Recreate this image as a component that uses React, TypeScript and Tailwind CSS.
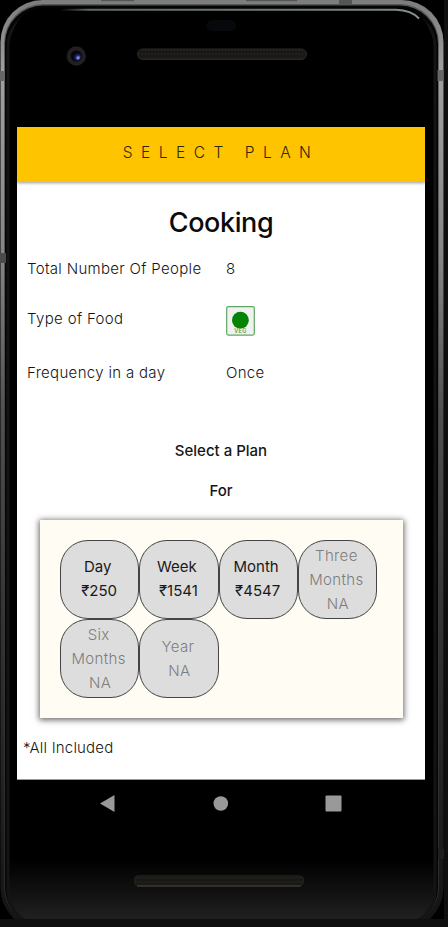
import React from 'react';

function Bezel() {
  return (
    <svg className="absolute left-0 top-0" width="448" height="927" viewBox="0 0 448 927" aria-hidden="true">
      <defs>
        <linearGradient id="rail" x1="0" y1="0" x2="0" y2="919" gradientUnits="userSpaceOnUse">
          <stop offset="0" stopColor="#7c7c7c" />
          <stop offset="0.08" stopColor="#a0a0a0" />
          <stop offset="0.28" stopColor="#858585" />
          <stop offset="0.45" stopColor="#505050" />
          <stop offset="0.65" stopColor="#363636" />
          <stop offset="0.8" stopColor="#272727" />
          <stop offset="1" stopColor="#141414" />
        </linearGradient>
        <linearGradient id="chin" x1="0" y1="860" x2="0" y2="919" gradientUnits="userSpaceOnUse">
          <stop offset="0" stopColor="#000" />
          <stop offset="1" stopColor="#202020" />
        </linearGradient>
        <linearGradient id="glint" x1="60" y1="0" x2="420" y2="0" gradientUnits="userSpaceOnUse">
          <stop offset="0" stopColor="#000" />
          <stop offset="0.08" stopColor="#5d686b" />
          <stop offset="0.9" stopColor="#7a8588" />
          <stop offset="1" stopColor="#8a9698" />
        </linearGradient>
        <radialGradient id="lens" cx="0.68" cy="0.7" r="0.6">
          <stop offset="0" stopColor="#a9b4ff" />
          <stop offset="0.25" stopColor="#5560c0" />
          <stop offset="0.55" stopColor="#141a4a" />
          <stop offset="1" stopColor="#05060c" />
        </radialGradient>
        <pattern id="mesh" width="3.2" height="4" patternUnits="userSpaceOnUse">
          <rect width="3.2" height="4" fill="#1a1815" />
          <circle cx="1.6" cy="2" r="1" fill="#23221f" />
        </pattern>
        <clipPath id="cut">
          <rect width="444" height="919" />
        </clipPath>
      </defs>
      <rect width="448" height="927" fill="#0f0f0f" />
      <rect width="444" height="919" fill="#000" />
      <g clipPath="url(#cut)">
        <rect x="0.500" y="0" width="443" height="930" rx="42" fill="url(#rail)" />
        <rect x="4" y="4" width="435" height="922" rx="39" fill="#3c3c3c" fillOpacity="0.6" />
        <rect x="5" y="5.500" width="433" height="920" rx="38" fill="#050505" />
        <rect x="8" y="12" width="427" height="913" rx="34" fill="url(#chin)" stroke="#141414" strokeWidth="3" />
        <rect x="12" y="8" width="419" height="852" rx="32" fill="#000" />
        <path d="M60 9.700H396C408 10 414 13 419 18.500" fill="none" stroke="url(#glint)" strokeWidth="2" />
        <rect x="101" y="0" width="33" height="1.200" fill="#555" />
        <rect x="246" y="0" width="51" height="1.200" fill="#555" />
        <rect x="339" y="0" width="13" height="5" fill="#555" />
        <rect x="0" y="71" width="5" height="10" fill="#666" />
        <rect x="437.500" y="70" width="6" height="11" fill="#666" />
        <rect x="0" y="253" width="6" height="10" fill="#4a4a4a" />
        <rect x="438" y="849" width="6" height="10" fill="#1f1f1f" />
      </g>
      <rect x="206.500" y="20" width="29.500" height="11" rx="5.500" fill="#07080c" />
      <circle cx="76.300" cy="56" r="9.700" fill="#211f20" />
      <circle cx="76.300" cy="56" r="5.500" fill="#05060c" />
      <circle cx="76.500" cy="56" r="4.500" fill="url(#lens)" />
      <rect x="137.500" y="49" width="169" height="10.500" rx="5.200" fill="url(#mesh)" stroke="#2b2927" />
      <rect x="134.500" y="875.800" width="169" height="10" rx="4" fill="url(#mesh)" stroke="#242320" />
      <path d="M137 886H301" stroke="#484740" strokeWidth="1" />
    </svg>
  );
}

function VegBadge() {
  return (
    <svg width="29" height="30" viewBox="0 0 29 30" aria-label="Veg">
      <rect x="0.700" y="0.700" width="27.600" height="28.400" rx="1.500" fill="#f1f1f1" stroke="#5fa863" strokeWidth="1.200" />
      <circle cx="14.400" cy="14.200" r="8.400" fill="#048304" />
      <text x="14.500" y="27.400" textAnchor="middle" fontSize="5.500" fontWeight="500" fontFamily="Inter, sans-serif" fill="#3f9443">VEG</text>
    </svg>
  );
}

function Detail({ label, className, children }: { label: string; className: string; children: React.ReactNode }) {
  return (
    <div className={`flex items-center pl-[10px] tracking-[0.320px] ${className}`}>
      <span className="w-[199px] shrink-0">{label}</span>
      {children}
    </div>
  );
}

const plans = [
  { lines: ['Day'], price: '₹250', on: true },
  { lines: ['Week'], price: '₹1541', on: true },
  { lines: ['Month'], price: '₹4547', on: true },
  { lines: ['Three', 'Months'], price: 'NA', on: false },
  { lines: ['Six', 'Months'], price: 'NA', on: false },
  { lines: ['Year'], price: 'NA', on: false },
];

export default function App() {
  return (
    <div className="relative h-[927px] w-[448px] overflow-hidden font-['Inter',sans-serif] text-[15px] font-light text-[#161616]">
      <Bezel />
      <div className="relative flex h-full flex-col pl-[17px] pt-[127px]">
        <main className="h-[653px] w-[408px] overflow-hidden border-b border-[#999] bg-white">
          <header className="flex h-[55px] items-center justify-center bg-[#ffc400] pb-[4px] text-[15.500px] tracking-[8.500px] text-[#2d2608] shadow-[0_1px_3px_rgba(0,0,0,0.4)]">
            SELECT PLAN
          </header>
          <h1 className="mt-[21px] text-center text-[27px] font-medium leading-[40px] tracking-[-0.400px] text-[#0b0b0b]">Cooking</h1>
          <Detail label="Total Number Of People" className="mt-[16px] h-[20px]">8</Detail>
          <div className="mt-[27px] flex h-[30px] pl-[10px] tracking-[0.350px]">
            <span className="w-[199px] shrink-0 leading-[26px]">Type of Food</span>
            <VegBadge />
          </div>
          <Detail label="Frequency in a day" className="mt-[27px] h-[20px]">Once</Detail>
          <h2 className="mt-[58px] text-center text-[15px] font-medium leading-[20px]">Select a Plan</h2>
          <h2 className="mt-[20px] text-center text-[15px] font-medium leading-[20px]">For</h2>
          <section className="ml-[23px] mt-[19px] h-[198px] w-[363px] bg-[#fffcf4] pl-[20px] pt-[20px] shadow-[0_1px_6px_1px_rgba(0,0,0,0.6)]">
            <div className="grid w-[317px] grid-cols-4">
              {plans.map((p) => (
                <button
                  key={p.lines.join(' ')}
                  className={`flex h-[79px] flex-col items-center justify-center rounded-[28px] border border-[#444] bg-[#ddd] leading-[24px] ${p.on ? 'pb-[1px] pr-[4px] font-normal text-[#1a1a1a]' : 'pr-[2px] tracking-[0.350px] text-[#7d7d7d]'}`}
                >
                  {p.lines.map((l) => <span key={l}>{l}</span>)}
                  <span className="pl-[3px]">{p.price}</span>
                </button>
              ))}
            </div>
          </section>
          <p className="ml-[6px] mt-[20px] leading-[20px] tracking-[0.200px]">*All Included</p>
        </main>
        <nav className="flex h-[48px] w-[408px] items-center">
          <svg width="408" height="20" viewBox="0 0 408 20" fill="#999">
            <path d="M83 9.500L97.500 1V18Z" />
            <circle cx="203.800" cy="9.500" r="7.300" />
            <rect x="308.500" y="1.500" width="16" height="16" rx="1" />
          </svg>
        </nav>
      </div>
    </div>
  );
}
